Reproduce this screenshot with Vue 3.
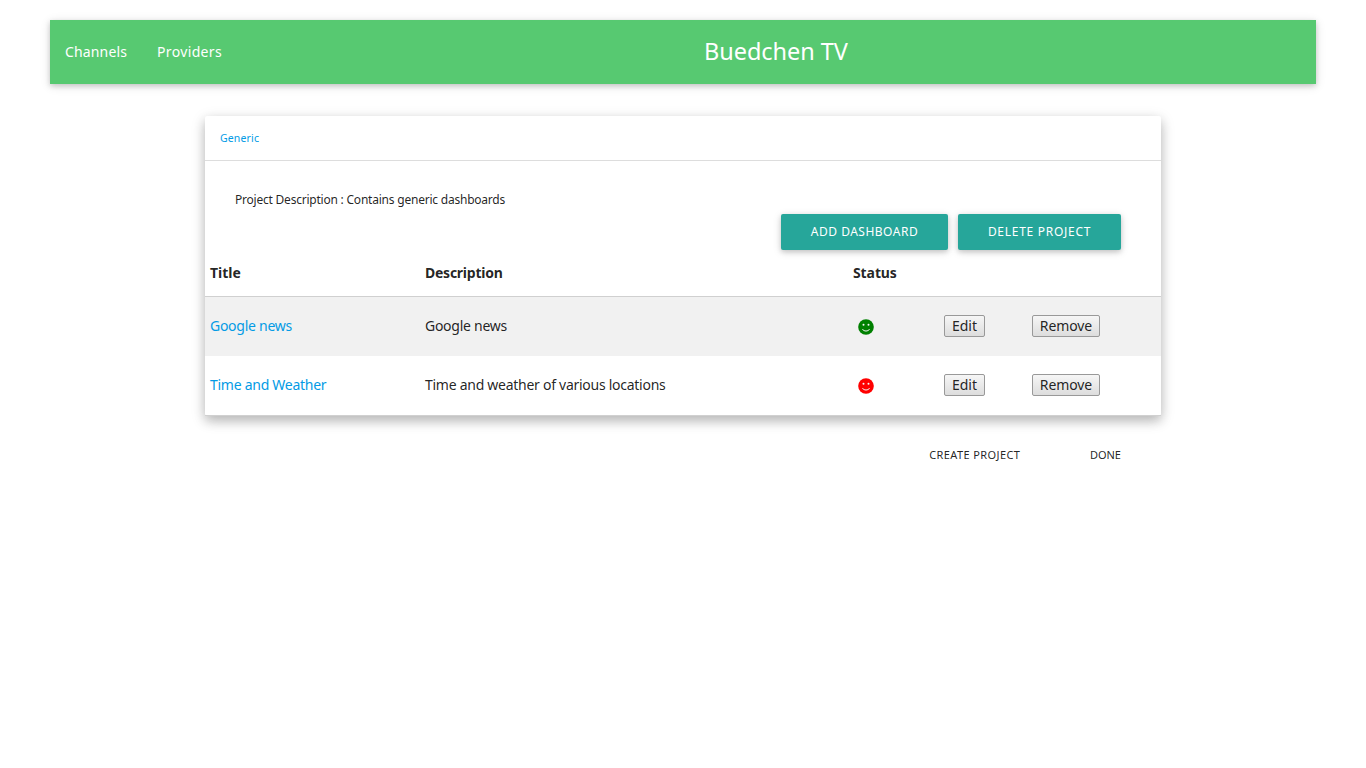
<script setup>
const dashboards = [
  { title: 'Google news', description: 'Google news', status: 'ok' },
  { title: 'Time and Weather', description: 'Time and weather of various locations', status: 'down' },
]
</script>

<template>
  <div class="page">
    <nav class="navbar">
      <a class="nav-channels">Channels</a>
      <a class="nav-providers">Providers</a>
      <span class="brand">Buedchen TV</span>
    </nav>
    <main>
      <section class="card">
        <header class="tab"><a>Generic</a></header>
        <p class="summary">Project Description : Contains generic dashboards</p>
        <div class="actions">
          <button class="btn add">ADD DASHBOARD</button>
          <button class="btn delete">DELETE PROJECT</button>
        </div>
        <div class="row head">
          <span class="h-title">Title</span><span class="h-desc">Description</span><span class="h-status">Status</span><span></span><span></span>
        </div>
        <div v-for="d in dashboards" :key="d.title" class="row item">
          <a>{{ d.title }}</a>
          <span>{{ d.description }}</span>
          <span class="status" :class="d.status">
            <svg width="16" height="16" viewBox="0 0 16 16">
              <circle cx="8" cy="8" r="7.8" fill="currentColor" />
              <circle class="eye" cx="5.5" cy="5.8" r="1" />
              <circle class="eye" cx="10.5" cy="5.8" r="1" />
              <path class="mouth" d="M4.5 10.2C5.8 12.6 10.2 12.6 11.5 10.2" />
            </svg>
          </span>
          <span class="cell"><button class="native edit">Edit</button></span>
          <span class="cell"><button class="native remove">Remove</button></span>
        </div>
      </section>
      <footer><a class="create">CREATE PROJECT</a><a class="done">DONE</a></footer>
    </main>
  </div>
</template>

<style>
body { margin: 0; background: #fff; }
</style>

<style scoped>
.page { padding: 20px 50px 0; font-family: "Noto Sans", "Open Sans", sans-serif; color: rgba(0, 0, 0, 0.87); font-size: 14px; white-space: nowrap; }
button { font-family: inherit; box-sizing: border-box; white-space: nowrap; }
.navbar { height: 64px; box-sizing: border-box; padding-bottom: 2px; background: #57c971; color: #fff; display: flex; align-items: center; box-shadow: 0 2px 5px 0 rgba(0, 0, 0, .16), 0 2px 10px 0 rgba(0, 0, 0, .12); }
.nav-channels { width: 92px; padding-left: 15px; box-sizing: border-box; letter-spacing: .15px; }
.nav-providers { width: 563px; padding-left: 15px; box-sizing: border-box; letter-spacing: .35px; margin-right: -15px; }
.brand { padding-left: 14px; font-size: 23.5px; letter-spacing: -.05px; }
main { width: 956px; margin: 32px 0 0 155px; }
.card { height: 300px; box-shadow: 0 5px 11px 0 rgba(0, 0, 0, .18), 0 4px 15px 0 rgba(0, 0, 0, .15); border-radius: 2px; }
.tab { height: 44px; border-bottom: 1px solid #ddd; padding-left: 15px; line-height: 44px; font-size: 10.5px; letter-spacing: .15px; }
a { color: inherit; }
.tab a, .item > a { color: #039be5; }
.summary { margin: 0; padding: 29px 0 0 30px; height: 24px; line-height: 20px; font-size: 12px; letter-spacing: -.22px; }
.actions { display: flex; justify-content: flex-end; gap: 10px; padding-right: 40px; height: 36px; }
.btn { height: 36px; border: 0; border-radius: 2px; padding: 0 0 2px; background: #26a69a; color: #fff; font-size: 12px; letter-spacing: .5px; box-shadow: 0 2px 5px 0 rgba(0, 0, 0, .16), 0 2px 10px 0 rgba(0, 0, 0, .12); }
.add { width: 167px; }
.delete { width: 163px; letter-spacing: .72px; }
.row { display: grid; grid-template-columns: 215px 428px 91px 88px 1fr; align-items: center; padding-left: 5px; box-sizing: border-box; }
.head { height: 47px; padding-bottom: 2px; border-bottom: 1px solid #d0d0d0; font-weight: 700; }
.h-desc { letter-spacing: -.25px; }
.h-status { letter-spacing: -.1px; }
.item { height: 59px; padding-bottom: 2px; letter-spacing: -.27px; }
.item:nth-of-type(3) { background: #f1f1f1; }
.item:last-child { height: 60px; border-bottom: 1px solid #d0d0d0; }
.status { height: 16px; padding: 2px 0 0 5px; }
.status svg { display: block; }
.ok { color: green; }
.down { color: red; }
.eye { fill: #f5f5f5; }
.mouth { fill: none; stroke: #f5f5f5; stroke-width: 1; }
.cell { display: flex; }
.native { height: 22px; padding: 0; border: 1px solid #999; border-radius: 2px; background: linear-gradient(#f6f6f6, #ddd); color: rgba(0, 0, 0, .87); font-size: 14px; line-height: 18px; }
.edit { width: 41px; }
.remove { width: 68px; letter-spacing: -.1px; }
footer { display: flex; justify-content: flex-end; gap: 70px; padding: 29px 40px 0 0; font-size: 11px; line-height: 20px; }
.create { letter-spacing: .4px; margin-right: -.4px; }
</style>
